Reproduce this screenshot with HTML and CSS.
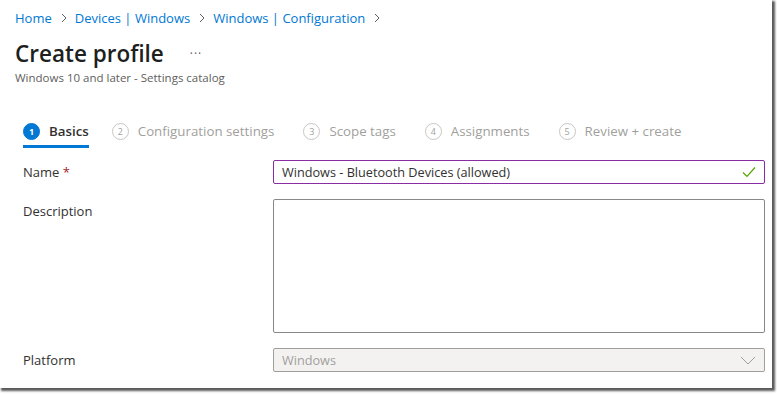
FILE: index.html
```html
<!DOCTYPE html>
<html>
<head>
<meta charset="utf-8">
<link rel="stylesheet" href="styles.css">
</head>
<body>
<div class="page">
  <nav class="crumbs">
    <a>Home</a><span class="sep"><svg width="8" height="10" viewBox="0 0 8 10"><path d="M2 1l4 4-4 4" fill="none" stroke="#605e5c" stroke-width="1"/></svg></span>
    <a>Devices | Windows</a><span class="sep"><svg width="8" height="10" viewBox="0 0 8 10"><path d="M2 1l4 4-4 4" fill="none" stroke="#605e5c" stroke-width="1"/></svg></span>
    <a>Windows | Configuration</a><span class="sep"><svg width="8" height="10" viewBox="0 0 8 10"><path d="M2 1l4 4-4 4" fill="none" stroke="#605e5c" stroke-width="1"/></svg></span>
  </nav>
  <header class="head">
    <h1 class="title">Create profile</h1>
    <span class="more">···</span>
  </header>
  <div class="subtitle">Windows 10 and later - Settings catalog</div>

  <div class="steps">
    <div class="step active"><span class="num">1</span><span class="lbl">Basics</span></div>
    <div class="step"><span class="num">2</span><span class="lbl">Configuration settings</span></div>
    <div class="step"><span class="num">3</span><span class="lbl">Scope tags</span></div>
    <div class="step"><span class="num">4</span><span class="lbl">Assignments</span></div>
    <div class="step"><span class="num">5</span><span class="lbl">Review + create</span></div>
  </div>

  <div class="form">
    <div class="row">
      <div class="label">Name <span class="req">*</span></div>
      <div class="field input name">
        <span>Windows - Bluetooth Devices (allowed)</span>
        <svg width="14" height="12" viewBox="0 0 14 12"><path d="M1 6.5l4 4 8-9" fill="none" stroke="#57a300" stroke-width="1.2"/></svg>
      </div>
    </div>
    <div class="row top">
      <div class="label desc">Description</div>
      <div class="field textarea"></div>
    </div>
    <div class="row">
      <div class="label">Platform</div>
      <div class="field input select">
        <span>Windows</span>
        <svg width="16" height="10" viewBox="0 0 16 10"><path d="M1 2l7 7 7-7" fill="none" stroke="#a19f9d" stroke-width="1"/></svg>
      </div>
    </div>
  </div>
</div>
</body>
</html>
```
FILE: styles.css
```css
html, body { margin: 0; padding: 0; background: #fff; }
body {
  font-family: "Open Sans", "Noto Sans", sans-serif;
  color: #323130;
  padding: 0 5px 6px 0;
}
.page {
  width: 772px;
  height: 388px;
  background: #fff;
  box-shadow: 2px 2px 2px 1px #5a5a5a;
  box-sizing: border-box;
  overflow: hidden;
}
.crumbs {
  display: flex;
  align-items: center;
  padding: 8px 0 0 15px;
  height: 20px;
  font-size: 13px;
  line-height: 20px;
  color: #0078d4;
}
.crumbs .sep { display: inline-flex; margin: 0 7px 0 8px; }
.head {
  display: flex;
  align-items: center;
  padding-left: 15px;
  margin-top: 10px;
  height: 32px;
}
.title {
  margin: 0;
  font-size: 22.5px;
  font-weight: 600;
  color: #201f1e;
  line-height: 32px;
}
.more {
  margin-left: 26px;
  font-size: 12px;
  color: #605e5c;
  letter-spacing: 1px;
  line-height: 12px;
}
.subtitle {
  padding-left: 15px;
  margin-top: 0;
  font-size: 11.5px;
  line-height: 16px;
  color: #605e5c;
}
.steps {
  display: flex;
  margin: 32px 0 0 23px;
  height: 30px;
}
.step {
  display: flex;
  align-items: flex-start;
  margin-right: 29px;
  box-sizing: border-box;
  height: 30px;
  padding-top: 4px;
}
.step .num {
  width: 15px;
  height: 15px;
  border: 1px solid #c8c6c4;
  border-radius: 50%;
  font-size: 9px;
  line-height: 15px;
  text-align: center;
  color: #a19f9d;
  margin-right: 9px;
  margin-top: 1px;
}
.step .lbl {
  font-size: 13.3px;
  line-height: 18px;
  color: #a19f9d;
}
.step.active { border-bottom: 3px solid #0078d4; margin-right: 23px; }
.step.active .num { background: #0078d4; border-color: #0078d4; color: #fff; font-weight: 700; }
.step.active .lbl { color: #323130; font-weight: 600; }
.form { padding: 0 7px 0 23px; margin-top: 12px; }
.row { display: flex; align-items: center; margin-bottom: 15px; }
.row.top { align-items: flex-start; }
.label { width: 250px; font-size: 13px; color: #323130; }
.label.desc { margin-top: 3px; }
.req { color: #a4262c; }
.field {
  flex: 1;
  box-sizing: border-box;
  border: 1px solid #8a8886;
  border-radius: 2px;
}
.input {
  height: 24px;
  display: flex;
  align-items: center;
  justify-content: space-between;
  padding: 0 8px;
  font-size: 12.7px;
}
.name { border-color: #8a2da5; color: #323130; }
.textarea { height: 134px; }
.select { background: #f3f2f1; border-color: #a19f9d; color: #a19f9d; }
```
